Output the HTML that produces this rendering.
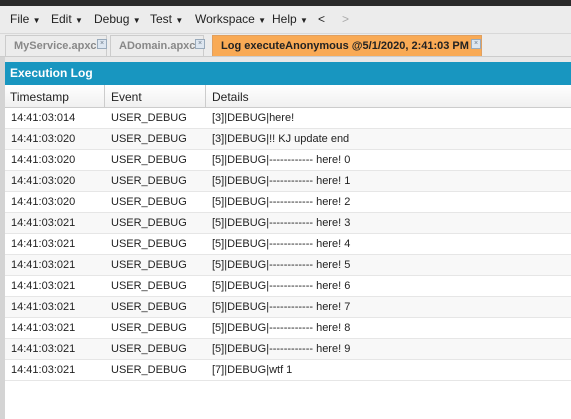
<!DOCTYPE html>
<html><head><style>
body{margin:0;width:571px;height:419px;overflow:hidden;background:#fff;font-family:"Liberation Sans",sans-serif;font-size:12px;position:relative}
.top{position:absolute;left:0;top:0;width:571px;height:6px;background:#2a2a2a}
.menu{position:absolute;left:0;top:6px;width:571px;height:27px;background:#ececec;border-bottom:1px solid #d8d8d8}
.menu span{position:absolute;top:6px;color:#222;font-size:12px;white-space:nowrap}
.menu b{font-size:8px;font-weight:normal}
.tabs{position:absolute;left:0;top:34px;width:571px;height:22px;background:#ececec;border-bottom:1px solid #ccc}
.tab{position:absolute;top:1px;height:21px;border:1px solid #ccc;border-bottom:none;background:#ececec;font-weight:bold;color:#888;font-size:11px;line-height:21px;padding-left:8px;box-sizing:border-box;white-space:nowrap}
.tab i{position:absolute;top:3px;width:8px;height:8px;border:1px solid #9ab;background:#dde6f0;font-style:normal;font-size:7px;line-height:8px;text-align:center;color:#678;font-weight:normal}
.gap{position:absolute;left:0;top:57px;width:571px;height:5px;background:#e8e8e8}
.left{position:absolute;left:0;top:57px;width:5px;height:362px;background:#d4d4d4}
.hdr{position:absolute;left:5px;top:62px;width:566px;height:23px;background:#1896c0;color:#fff;font-weight:bold;line-height:23px;padding-left:5px;box-sizing:border-box;font-size:12px}
.th{position:absolute;left:5px;top:85px;width:566px;height:23px;background:linear-gradient(#fff,#f0f0f0);border-bottom:1px solid #ccc;box-sizing:border-box}
.th span{position:absolute;top:5px;color:#222;height:18px}
.row{position:absolute;left:5px;width:566px;height:21px;border-bottom:1px solid #e6e6e6;box-sizing:border-box;color:#222;font-size:11px;line-height:20px}
.row span{position:absolute;white-space:nowrap}
</style></head><body>
<div class="top"></div>
<div class="menu">
<span style="left:10px">File <b>▼</b></span><span style="left:51px">Edit <b>▼</b></span><span style="left:94px">Debug <b>▼</b></span><span style="left:150px">Test <b>▼</b></span><span style="left:195px">Workspace <b>▼</b></span><span style="left:272px">Help <b>▼</b></span><span style="left:318px">&lt;</span><span style="left:342px;color:#aaa">&gt;</span>
</div>
<div class="tabs">
<div class="tab" style="left:5px;width:102px;padding-left:8px">MyService.apxc<i style="left:91px">×</i></div>
<div class="tab" style="left:110px;width:94px">ADomain.apxc<i style="left:84px">×</i></div>
<div class="tab" style="left:212px;width:270px;background:#f9aa55;color:#222;border-color:#e0a060;padding-left:8px">Log executeAnonymous @5/1/2020, 2:41:03 PM<i style="left:258px">×</i></div>
</div>
<div class="gap"></div>
<div class="left"></div>
<div class="hdr">Execution Log</div>
<div class="th"><span style="left:5px">Timestamp</span><span style="left:99px;border-left:1px solid #ccc;top:0;padding:5px 0 0 6px">Event</span><span style="left:200px;border-left:1px solid #ccc;top:0;padding:5px 0 0 6px">Details</span></div>
<div class="row" style="top:108px"><span style="left:6px">14:41:03:014</span><span style="left:106px">USER_DEBUG</span><span style="left:207px">[3]|DEBUG|here!</span></div>
<div class="row" style="top:129px;background:#f8f8f8"><span style="left:6px">14:41:03:020</span><span style="left:106px">USER_DEBUG</span><span style="left:207px">[3]|DEBUG|!! KJ update end</span></div>
<div class="row" style="top:150px"><span style="left:6px">14:41:03:020</span><span style="left:106px">USER_DEBUG</span><span style="left:207px">[5]|DEBUG|------------ here! 0</span></div>
<div class="row" style="top:171px;background:#f8f8f8"><span style="left:6px">14:41:03:020</span><span style="left:106px">USER_DEBUG</span><span style="left:207px">[5]|DEBUG|------------ here! 1</span></div>
<div class="row" style="top:192px"><span style="left:6px">14:41:03:020</span><span style="left:106px">USER_DEBUG</span><span style="left:207px">[5]|DEBUG|------------ here! 2</span></div>
<div class="row" style="top:213px;background:#f8f8f8"><span style="left:6px">14:41:03:021</span><span style="left:106px">USER_DEBUG</span><span style="left:207px">[5]|DEBUG|------------ here! 3</span></div>
<div class="row" style="top:234px"><span style="left:6px">14:41:03:021</span><span style="left:106px">USER_DEBUG</span><span style="left:207px">[5]|DEBUG|------------ here! 4</span></div>
<div class="row" style="top:255px;background:#f8f8f8"><span style="left:6px">14:41:03:021</span><span style="left:106px">USER_DEBUG</span><span style="left:207px">[5]|DEBUG|------------ here! 5</span></div>
<div class="row" style="top:276px"><span style="left:6px">14:41:03:021</span><span style="left:106px">USER_DEBUG</span><span style="left:207px">[5]|DEBUG|------------ here! 6</span></div>
<div class="row" style="top:297px;background:#f8f8f8"><span style="left:6px">14:41:03:021</span><span style="left:106px">USER_DEBUG</span><span style="left:207px">[5]|DEBUG|------------ here! 7</span></div>
<div class="row" style="top:318px"><span style="left:6px">14:41:03:021</span><span style="left:106px">USER_DEBUG</span><span style="left:207px">[5]|DEBUG|------------ here! 8</span></div>
<div class="row" style="top:339px;background:#f8f8f8"><span style="left:6px">14:41:03:021</span><span style="left:106px">USER_DEBUG</span><span style="left:207px">[5]|DEBUG|------------ here! 9</span></div>
<div class="row" style="top:360px"><span style="left:6px">14:41:03:021</span><span style="left:106px">USER_DEBUG</span><span style="left:207px">[7]|DEBUG|wtf 1</span></div>
</body></html>
